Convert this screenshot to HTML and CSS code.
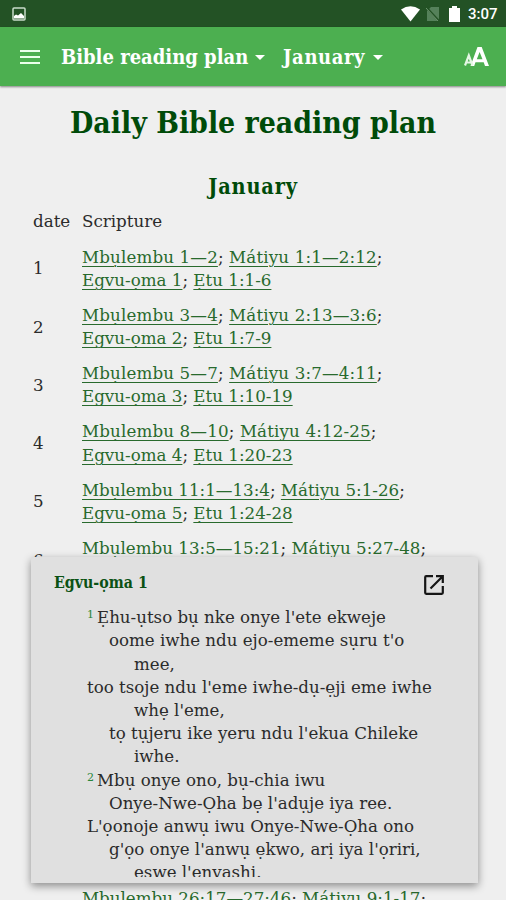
FILE: index.html
```html
<!DOCTYPE html>
<html lang="en">
<head>
<meta charset="utf-8">
<title>Daily Bible reading plan</title>
<link rel="stylesheet" href="styles.css">
</head>
<body>
<div class="screen">
  <div class="status">
    <svg class="status-photo" width="14" height="14" viewBox="0 0 14 14"><rect x="1" y="1" width="12" height="12" rx="1" fill="none" stroke="#c9dcca" stroke-width="1.5"/><path d="M2 11.500V9l2-1.500 2 1L9 6l3 3v2.500z" fill="#fff"/></svg>
    <svg width="19" height="16" viewBox="0 0 19 16"><path d="M0 3.500Q9.500-3 19 3.500L9.500 15.500z" fill="#fff"/></svg>
    <svg class="status-sim" width="14" height="16" viewBox="0 0 14 16"><path d="M5 1h8v14H1V5z" fill="#55815a"/><path d="M0 1l13 14" stroke="#235225" stroke-width="2"/><path d="M0 2l12 13" stroke="#6d936f"/></svg>
    <svg class="status-battery" width="11" height="16" viewBox="0 0 11 16"><path d="M3 0h5v2h3v14H0V2h3z" fill="#fff"/></svg>
    <span class="clock">3:07</span>
  </div>
  <header class="bar">
    <svg class="menu" width="20" height="14" viewBox="0 0 20 14"><path d="M0 1h20M0 7h20M0 13h20" stroke="#eaffea" stroke-width="2"/></svg>
    <span class="book">Bible reading plan</span><i class="caret"></i>
    <span class="month">January</span><i class="caret"></i>
    <svg class="text-size" width="25" height="20" viewBox="0 0 25 20"><path fill="#fff" fill-rule="evenodd" d="M13.500 0h4.200L25 19h-4l-1.300-3.700h-8.200L10.200 19H6.500zM15.600 5L12.800 12.300h5.700z"/><path d="M1 18.500L4.800 8.500l3.700 10M2.500 15.500h5" fill="none" stroke="#e4f7e4" stroke-width="2.200"/></svg>
  </header>
  <main class="page">
    <h1>Daily Bible reading plan</h1>
    <h2>January</h2>
    <div class="plan">
      <div class="head"><span>date</span><span>Scripture</span></div>
      <div class="row"><span>1</span><div><p class="first"><a>Mbụlembu 1—2</a>; <a>Mátiyu 1:1—2:12</a>;</p><p><a>Egvu-ọma 1</a>; <a>Ẹtu 1:1-6</a></p></div></div>
      <div class="row"><span>2</span><div><p class="first"><a>Mbụlembu 3—4</a>; <a>Mátiyu 2:13—3:6</a>;</p><p><a>Egvu-ọma 2</a>; <a>Ẹtu 1:7-9</a></p></div></div>
      <div class="row"><span>3</span><div><p class="first"><a>Mbụlembu 5—7</a>; <a>Mátiyu 3:7—4:11</a>;</p><p><a>Egvu-ọma 3</a>; <a>Ẹtu 1:10-19</a></p></div></div>
      <div class="row"><span>4</span><div><p class="first"><a>Mbụlembu 8—10</a>; <a>Mátiyu 4:12-25</a>;</p><p><a>Egvu-ọma 4</a>; <a>Ẹtu 1:20-23</a></p></div></div>
      <div class="row"><span>5</span><div><p><a>Mbụlembu 11:1—13:4</a>; <a>Mátiyu 5:1-26</a>;</p><p><a>Egvu-ọma 5</a>; <a>Ẹtu 1:24-28</a></p></div></div>
      <div class="row partial"><span>6</span><div><p><a>Mbụlembu 13:5—15:21</a>; <a>Mátiyu 5:27-48</a>;</p></div></div>
      <div class="covered"></div>
      <div class="row partial"><span></span><div><p><a>Mbụlembu 26:17—27:46</a>; <a>Mátiyu 9:1-17</a>;</p></div></div>
    </div>
  </main>
  <section class="popup">
    <div class="popup-head">
      <h3>Egvu-ọma 1</h3>
      <svg width="20" height="20" viewBox="0 0 20 20"><path d="M9 1.200H2.200Q1.200 1.200 1.200 2.200V17.800Q1.200 18.800 2.200 18.800H17.800Q18.800 18.800 18.800 17.800V11M12 1.200h6.800V8M18.500 1.500L6.500 13.500" fill="none" stroke="#151515" stroke-width="2.200"/></svg>
    </div>
    <div class="verses">
      <p class="q0"><sup>1</sup>Ẹhu-ụtso bụ nke onye l'ete ekweje</p>
      <p class="q1">oome iwhe ndu ejo-ememe sụru t'o</p>
      <p class="q2">mee,</p>
      <p class="q0">too tsoje ndu l'eme iwhe-dụ-ẹji eme iwhe</p>
      <p class="q2">whẹ l'eme,</p>
      <p class="q1">tọ tụjeru ike yeru ndu l'ekua Chileke</p>
      <p class="q2">iwhe.</p>
      <p class="q0"><sup>2</sup>Mbụ onye ono, bụ-chia iwu</p>
      <p class="q1">Onye-Nwe-Ọha bẹ l'adụje iya ree.</p>
      <p class="q0">L'ọonoje anwụ iwu Onye-Nwe-Ọha ono</p>
      <p class="q1">g'ọo onye l'anwụ ẹkwo, arị iya l'ọriri,</p>
      <p class="q2">eswe l'enyashi.</p>
    </div>
  </section>
</div>
</body>
</html>
```

FILE: styles.css
```css
* { box-sizing: border-box; }
body { margin: 0; background: #efefef; font-family: "DejaVu Serif", serif; color: #2b2b2b; }
p { margin: 0; }
.screen { position: relative; height: 900px; overflow: hidden; }
.status { height: 27px; background: #235225; display: flex; align-items: center; padding: 1px 8px 0 12px; }
.status-photo { margin-right: auto; }
.status-sim { margin-left: 6px; }
.status-battery { margin: 0 8px 0 9px; }
.clock { font: 500 15px/20px Roboto, sans-serif; color: #fff; width: 30px; }
.bar, h1, h2, h3 { font-family: "DejaVu Serif Condensed", "DejaVu Serif", serif; font-stretch: condensed; font-weight: 700; }
.bar { height: 59px; background: #4caf50; display: flex; align-items: center; padding: 1px 17px 0 20px; color: #fff; font-size: 20px; box-shadow: 0 1px 2px rgba(0,0,0,.45); white-space: nowrap; }
.book { width: 187px; margin-left: 21px; }
.month { width: 83px; margin-left: 18px; letter-spacing: .6px; }
.caret { border: 5px solid transparent; border-top-color: #fff; border-bottom: 0; margin-left: 7px; }
.text-size { margin-left: auto; }
.page { padding: 17px 0 0 33px; }
h1, h2 { margin: 0 33px 0 0; text-align: center; color: #004b09; white-space: nowrap; }
h1 { font-size: 29.900px; line-height: 40px; }
h2 { font-size: 21.500px; line-height: 30px; margin-top: 29px; letter-spacing: .8px; }
.head, .row { display: grid; grid-template-columns: 49px 1fr; font-size: 16.700px; line-height: 23.300px; white-space: nowrap; }
.head { padding-top: 8px; height: 43.600px; }
.row { align-items: center; height: 46.600px; margin-bottom: 11.700px; }
.row a { color: #286a2d; text-decoration: underline; text-decoration-thickness: 1px; text-underline-offset: 3px; }
.first { letter-spacing: .14px; }
.partial div { align-self: start; }
.covered { height: 291.500px; }
.popup { position: absolute; left: 31px; top: 557px; width: 447px; height: 326px; background: #e0e0e0; border-radius: 3px 3px 0 0; box-shadow: 0 3px 9px rgba(0,0,0,.42); padding: 14px 34px 0 23px; }
.popup-head { display: flex; justify-content: space-between; height: 35.300px; }
.popup-head svg { margin-top: 4px; }
h3 { margin: 0; font-size: 15.800px; line-height: 24px; color: #0b5214; }
.verses { height: 271px; overflow: hidden; font-size: 16.650px; line-height: 23.200px; white-space: nowrap; margin-right: -20px; }
.verses p { height: 23.200px; }
.q0 { padding-left: 33px; }
.q1 { padding-left: 55px; }
.q2 { padding-left: 80px; }
sup { display: inline-block; width: 10px; font-size: 11px; line-height: 10px; vertical-align: 5px; color: #28863b; }
```
